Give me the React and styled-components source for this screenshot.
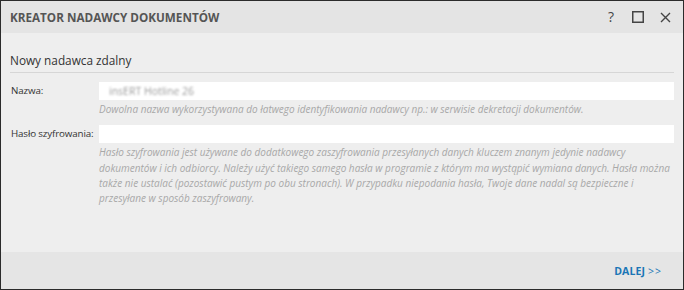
import React from 'react';
import styled, { createGlobalStyle } from 'styled-components';

const GlobalStyle = createGlobalStyle`
    html, body {
        margin: 0;
        padding: 0;
        background: #ffffff;
    }
    body {
        font-family: "Open Sans", "Noto Sans", sans-serif;
    }
`;

const Window = styled.div`
    width: 684px;
    height: 290px;
    box-sizing: border-box;
    border: 1px solid #2b2b2b;
    background: #eeeeee;
    display: flex;
    flex-direction: column;
`;

const TitleBar = styled.div`
    height: 32px;
    background: #e4e4e4;
    display: flex;
    align-items: center;
    padding: 0 11px 0 9px;
`;

const Title = styled.div`
    font-size: 11.7px;
    font-weight: 700;
    color: #555555;
    margin-right: auto;
`;

const TitleButtons = styled.div`
    display: flex;
    align-items: center;
    gap: 13px;
    color: #444444;
`;

const IconButton = styled.div`
    width: 14px;
    height: 16px;
    display: flex;
    align-items: center;
    justify-content: center;
    font-size: 14px;
    line-height: 1;
`;

const Body = styled.div`
    flex: 1;
    padding: 19px 9px 0 9px;
`;

const SectionTitle = styled.div`
    font-size: 11.8px;
    color: #333333;
    padding-bottom: 4px;
    border-bottom: 1px solid #d6d6d6;
`;

const Form = styled.div`
    display: grid;
    grid-template-columns: 89px 1fr;
    margin-top: 9px;
`;

const Label = styled.div`
    font-size: 9.8px;
    letter-spacing: -0.15px;
    color: #333333;
    line-height: 18px;
    white-space: nowrap;
    padding-left: 1px;
`;

const Field = styled.div`
    display: flex;
    flex-direction: column;
    margin-bottom: ${p => p.$gap}px;
`;

const Input = styled.div`
    height: 18px;
    background: #ffffff;
    display: flex;
    align-items: center;
    padding-left: 10px;
`;

const Blurred = styled.span`
    font-size: 10.5px;
    color: #9a9a9a;
    filter: blur(1.3px);
`;

const Hint = styled.div`
    font-size: 10px;
    font-style: italic;
    color: #a8a8a8;
    line-height: 15.3px;
    margin-top: 2px;
    padding-right: 2px;
`;

const Footer = styled.div`
    height: 36px;
    background: #e5e5e5;
    display: flex;
    align-items: center;
    justify-content: flex-end;
    padding-right: 21px;
    padding-top: 1px;
`;

const NextButton = styled.div`
    font-size: 10.5px;
    font-weight: 700;
    color: #1b76b6;
    letter-spacing: 0.1px;

    span {
        font-weight: 400;
        margin-left: 3px;
        letter-spacing: 1px;
    }
`;

export default function App() {
    return (
        <>
            <GlobalStyle />
            <Window>
                <TitleBar>
                    <Title>KREATOR NADAWCY DOKUMENTÓW</Title>
                    <TitleButtons>
                        <IconButton>?</IconButton>
                        <IconButton>
                            <svg width="12" height="12" viewBox="0 0 12 12">
                                <rect x="0.75" y="0.75" width="10.5" height="10.5" fill="none" stroke="#444" strokeWidth="1.5" />
                            </svg>
                        </IconButton>
                        <IconButton>
                            <svg width="11" height="11" viewBox="0 0 11 11">
                                <path d="M1 1 L10 10 M10 1 L1 10" stroke="#444" strokeWidth="1.4" />
                            </svg>
                        </IconButton>
                    </TitleButtons>
                </TitleBar>
                <Body>
                    <SectionTitle>Nowy nadawca zdalny</SectionTitle>
                    <Form>
                        <Label>Nazwa:</Label>
                        <Field $gap={8}>
                            <Input><Blurred>insERT Hotline 26</Blurred></Input>
                            <Hint>Dowolna nazwa wykorzystywana do łatwego identyfikowania nadawcy np.: w serwisie dekretacji dokumentów.</Hint>
                        </Field>
                        <Label>Hasło szyfrowania:</Label>
                        <Field $gap={0}>
                            <Input />
                            <Hint>
                                Hasło szyfrowania jest używane do dodatkowego zaszyfrowania przesyłanych danych kluczem znanym jedynie nadawcy dokumentów i ich odbiorcy. Należy użyć takiego samego hasła w programie z którym ma wystąpić wymiana danych. Hasła można także nie ustalać (pozostawić pustym po obu stronach). W przypadku niepodania hasła, Twoje dane nadal są bezpieczne i przesyłane w sposób zaszyfrowany.
                            </Hint>
                        </Field>
                    </Form>
                </Body>
                <Footer>
                    <NextButton>DALEJ<span>&gt;&gt;</span></NextButton>
                </Footer>
            </Window>
        </>
    );
}
